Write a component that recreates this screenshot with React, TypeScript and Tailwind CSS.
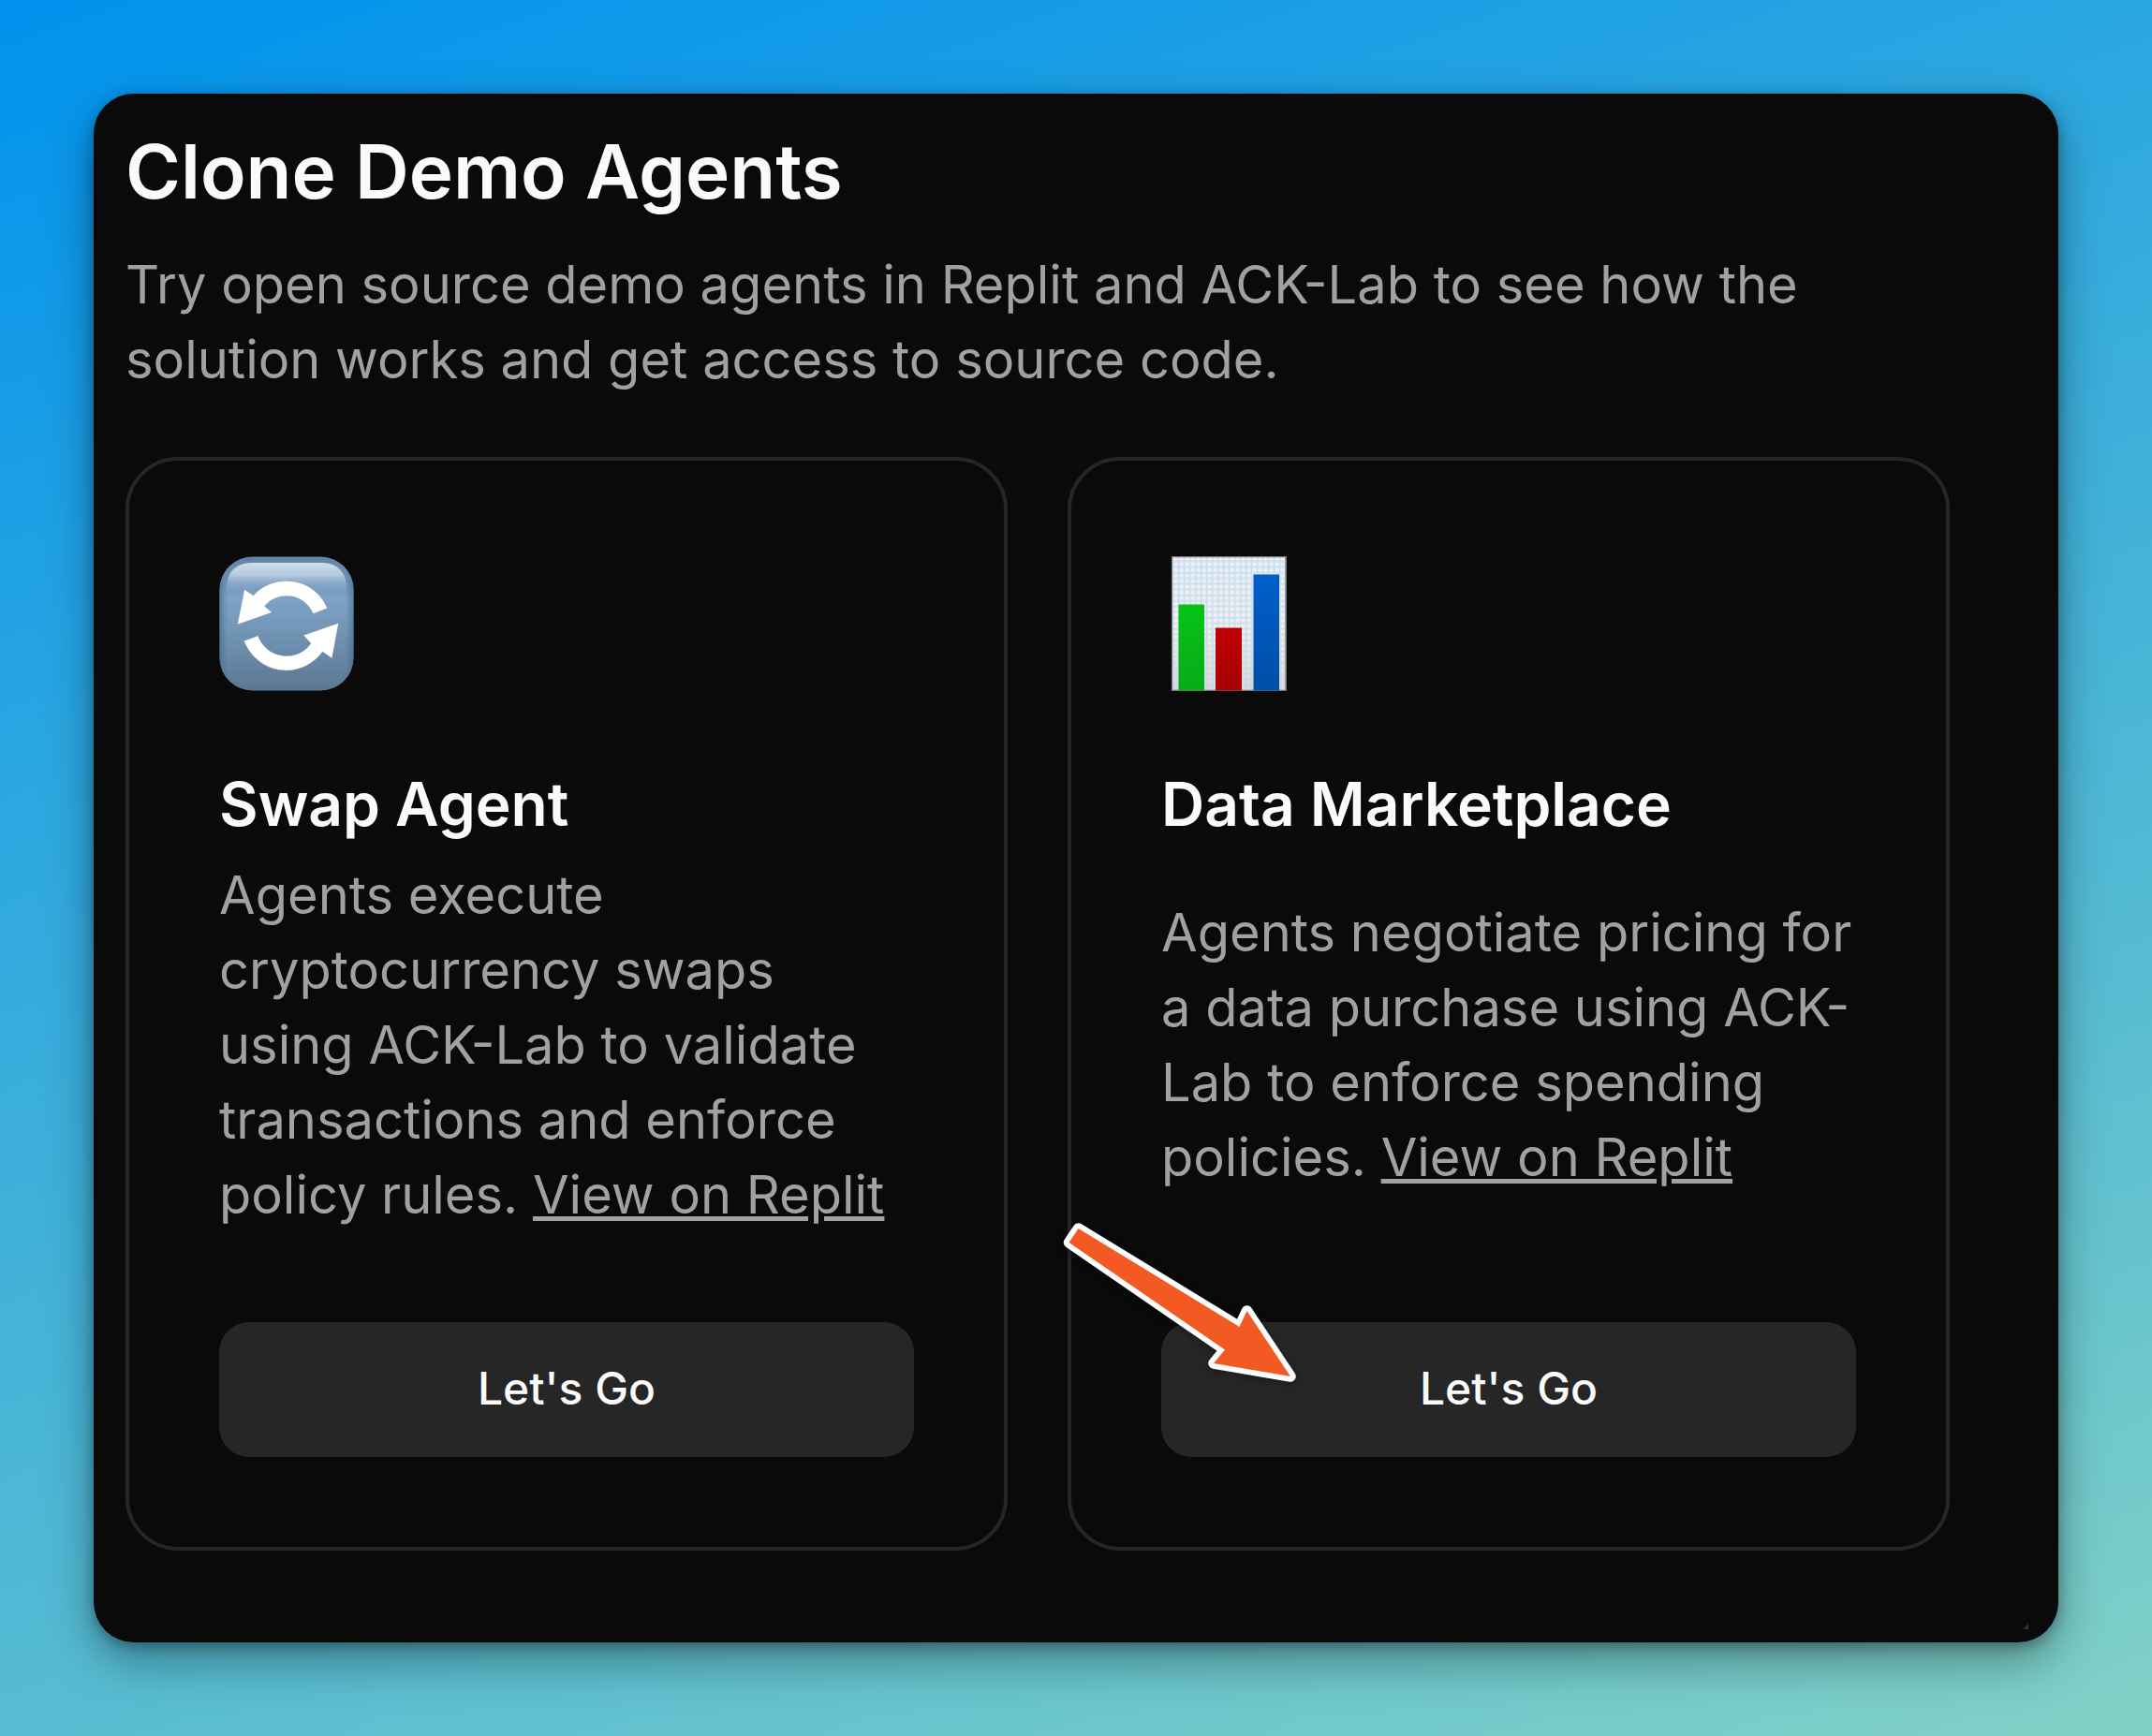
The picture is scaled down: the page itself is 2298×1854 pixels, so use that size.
import type { ReactNode } from "react";

function SwapIcon() {
  return (
    <svg viewBox="0 0 144 144" className="h-[144px] w-[144px]">
      <defs>
        <linearGradient id="tile" x1="0" y1="0" x2="0" y2="1">
          <stop offset="0" stopColor="#5f82a5" />
          <stop offset="0.32" stopColor="#7ea2c8" />
          <stop offset="0.6" stopColor="#7092b2" />
          <stop offset="1" stopColor="#5b7792" />
        </linearGradient>
        <linearGradient id="gloss" x1="0" y1="0" x2="0" y2="1">
          <stop offset="0" stopColor="#cfdde9" />
          <stop offset="0.4" stopColor="#b8cde0" stopOpacity="0.95" />
          <stop offset="1" stopColor="#7ea2c8" stopOpacity="0" />
        </linearGradient>
        <linearGradient id="edge" x1="0" y1="0" x2="1" y2="0">
          <stop offset="0" stopColor="#48688a" stopOpacity="0.6" />
          <stop offset="0.06" stopColor="#48688a" stopOpacity="0" />
          <stop offset="0.94" stopColor="#48688a" stopOpacity="0" />
          <stop offset="1" stopColor="#48688a" stopOpacity="0.6" />
        </linearGradient>
      </defs>
      <rect x="0.5" y="0.5" width="143" height="143" rx="35" fill="url(#tile)" />
      <rect x="0.5" y="0.5" width="143" height="143" rx="35" fill="url(#edge)" />
      <path d="M8 40V34C8 17 18 7 35 7H109C126 7 136 17 136 34V40Z" fill="url(#gloss)" />
      <g fill="#fff" stroke="#7b8087" strokeOpacity="0.35" strokeWidth="0.8">
        <path d="M27 35.5 36.5 42C45.500 32 58 26.500 72 26.500C92 26.500 108 38 115.500 55.500L100.500 61.500C95.500 50 85.500 42.500 72 42.500C62.500 42.500 54 46.500 48.500 53.500L56.500 60L19.500 73Z" />
        <path d="M127.500 71.500 120.500 109 110.500 102C101.500 114 88 122 72 122C51 122 34 109 26.500 90.500L41.500 85C46 97 57 106.500 72 106.500C84 106.500 92.500 101 98 93L90 84.500Z" />
      </g>
    </svg>
  );
}

function ChartIcon() {
  return (
    <svg viewBox="0 0 144 144" className="h-[144px] w-[144px]">
      <defs>
        <linearGradient id="sheet" x1="0" y1="0" x2="0" y2="1">
          <stop offset="0" stopColor="#eef1f4" />
          <stop offset="0.5" stopColor="#f4f2f0" />
          <stop offset="1" stopColor="#dcd9d6" />
        </linearGradient>
        <linearGradient id="green" x1="0" y1="0" x2="0" y2="1">
          <stop offset="0" stopColor="#06c414" />
          <stop offset="1" stopColor="#08ab1a" />
        </linearGradient>
        <linearGradient id="red" x1="0" y1="0" x2="0" y2="1">
          <stop offset="0" stopColor="#c00000" />
          <stop offset="1" stopColor="#a60000" />
        </linearGradient>
        <linearGradient id="blue" x1="0" y1="0" x2="0" y2="1">
          <stop offset="0" stopColor="#005fcb" />
          <stop offset="1" stopColor="#004ea6" />
        </linearGradient>
        <pattern id="grid" x="17.500" y="4.500" width="6" height="6" patternUnits="userSpaceOnUse">
          <path d="M0 1.200H6M1.200 0V6" stroke="#bcd8ee" strokeWidth="2" strokeOpacity="0.7" />
        </pattern>
      </defs>
      <rect x="11" y="0.500" width="122.500" height="143" fill="url(#sheet)" />
      <rect x="11.500" y="1" width="121.500" height="142" fill="url(#grid)" />
      <rect x="11.500" y="0.700" width="121.500" height="142.600" fill="none" stroke="#77777a" strokeWidth="1.200" />
      <rect x="18.500" y="51.500" width="27.500" height="92" fill="url(#green)" />
      <rect x="58" y="76.500" width="28" height="67" fill="url(#red)" />
      <rect x="98.500" y="19.500" width="27.500" height="124" fill="url(#blue)" />
    </svg>
  );
}

function PointerArrow() {
  return (
    <svg
      viewBox="0 0 290 210"
      className="pointer-events-none absolute left-[-24px] top-[798px] h-[210px] w-[290px] overflow-visible drop-shadow-[0_2px_5px_rgba(0,0,0,0.35)]"
    >
      <path
        d="M31.500 22 203.500 127 211.500 110 258 180 176 166 188 151.500 21.500 37Z"
        fill="#fff"
        stroke="#fff"
        strokeWidth="11.500"
        strokeLinejoin="round"
      />
      <path d="M31.500 22 203.500 127 211.500 110 258 180 176 166 188 151.500 21.500 37Z" fill="#f35a23" />
    </svg>
  );
}

function AgentCard({ icon, title, children, pointer }: { icon: ReactNode; title: string; children: ReactNode; pointer?: ReactNode }) {
  return (
    <article className="relative flex h-[1168px] w-[942px] flex-col rounded-[56px] border-4 border-[#262626] px-24 pb-24 pt-[102px]">
      {icon}
      <h2 className="mt-[89px] text-[64px] font-semibold leading-[64px] text-[#fafafa]">{title}</h2>
      <div className="mt-[25px] flex h-[400px] items-center">
        <p className="whitespace-nowrap text-[56px] leading-[80px] text-[#a1a1a1]">{children}</p>
      </div>
      <button className="mt-24 h-[144px] w-full shrink-0 rounded-[32px] bg-[#262626] pb-[2px] text-[48px] font-medium text-[#fafafa]">
        Let's Go
      </button>
      {pointer}
    </article>
  );
}

export default function App() {
  return (
    <div className="h-[1854px] w-[2298px] overflow-hidden bg-[linear-gradient(160.5deg,#0092ee_0%,#2aa6e1_30.5%,#57bcd2_69.5%,#82d1c6_100%)] p-[100px] font-['Inter',sans-serif]">
      <main className="relative h-[1654px] w-[2098px] rounded-[43px] bg-[#0a0a0a] pl-[34px] pt-[43px] shadow-[0_20px_50px_rgba(0,0,0,0.35),0_4px_14px_rgba(0,0,0,0.3)]">
        <h1 className="text-[80px] font-semibold leading-[80px] text-[#fafafa]">Clone Demo Agents</h1>
        <p className="mt-[41px] whitespace-nowrap text-[56px] leading-[80px] text-[#a1a1a1]">
          Try open source demo agents in Replit and ACK-Lab to see how the
          <br />
          solution works and get access to source code.
        </p>
        <div className="mt-16 flex gap-16">
          <AgentCard icon={<SwapIcon />} title="Swap Agent">
            Agents execute
            <br />
            cryptocurrency swaps
            <br />
            using ACK-Lab to validate
            <br />
            transactions and enforce
            <br />
            policy rules. <a className="underline">View on Replit</a>
          </AgentCard>
          <AgentCard icon={<ChartIcon />} title="Data Marketplace" pointer={<PointerArrow />}>
            Agents negotiate pricing for
            <br />
            a data purchase using ACK-
            <br />
            Lab to enforce spending
            <br />
            policies. <a className="underline">View on Replit</a>
          </AgentCard>
        </div>
        <svg viewBox="0 0 6 6" className="absolute bottom-[14px] right-[32px] h-[6px] w-[6px]">
          <path d="M6 0V6H0Z" fill="#333" />
        </svg>
      </main>
    </div>
  );
}
